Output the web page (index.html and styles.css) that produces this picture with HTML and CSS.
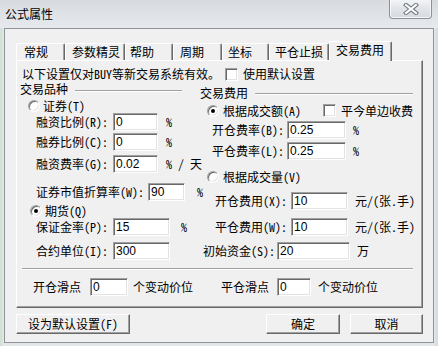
FILE: index.html
```html
<!DOCTYPE html>
<html lang="zh-CN">
<head>
<meta charset="utf-8">
<title>公式属性</title>
<link rel="stylesheet" href="styles.css">
</head>
<body>
<div class="window">
  <div class="titlebar">
    <span class="title">公式属性</span>
    <div class="close">
      <svg width="18" height="12" viewBox="0 0 18 12">
        <path d="M4 2 L14 10 M14 2 L4 10" stroke="#737b85" stroke-width="4.2" stroke-linecap="square"/>
        <path d="M4 2 L14 10 M14 2 L4 10" stroke="#ffffff" stroke-width="2" stroke-linecap="square"/>
      </svg>
    </div>
  </div>
  <div class="client">
    <div class="tabs">
      <div class="tab t-a">常规</div>
      <div class="tab t-b">参数精灵</div>
      <div class="tab t-c">帮助</div>
      <div class="tab t-d">周期</div>
      <div class="tab t-e">坐标</div>
      <div class="tab t-f">平仓止损</div>
      <div class="tab sel">交易费用</div>
    </div>
    <div class="panel">
      <div class="intro">
        <span class="intro-text">以下设置仅对BUY等新交易系统有效。</span>
        <span class="check"></span>
        <span class="check-label">使用默认设置</span>
      </div>
      <div class="cols">
        <div class="col col-left">
          <div class="group-head gh-left"><span>交易品种</span><span class="etch gl-left"></span></div>
          <div class="radio-row rr-sec"><span class="radio"></span><span>证券(T)</span></div>
          <div class="row r1"><span class="lbl l-l">融资比例(R):</span><input class="inp i-l1" value="0"><span class="unit u-l">%</span></div>
          <div class="row r2"><span class="lbl l-l">融券比例(C):</span><input class="inp i-l1" value="0"><span class="unit u-l">%</span></div>
          <div class="row r3"><span class="lbl l-l">融资费率(G):</span><input class="inp i-l1" value="0.02"><span class="unit u-l">% / 天</span></div>
          <div class="row r4"><span class="lbl l-w">证券市值折算率(W):</span><input class="inp i-l2" value="90"><span class="unit u-w">%</span></div>
          <div class="radio-row rr-fut"><span class="radio on"></span><span>期货(Q)</span></div>
          <div class="row r5"><span class="lbl l-l">保证金率(P):</span><input class="inp i-l3" value="15"><span class="unit u-p">%</span></div>
          <div class="row r6"><span class="lbl l-l">合约单位(I):</span><input class="inp i-l3" value="300"></div>
        </div>
        <div class="col col-right">
          <div class="group-head gh-right"><span>交易费用</span><span class="etch gl-right"></span></div>
          <div class="radio-row rr-amt">
            <span class="radio on"></span><span class="radio-text-amt">根据成交额(A)</span>
            <span class="check"></span><span class="check-label">平今单边收费</span>
          </div>
          <div class="row q1"><span class="lbl l-r1">开仓费率(B):</span><input class="inp i-r1" value="0.25"><span class="unit u-r">%</span></div>
          <div class="row q2"><span class="lbl l-r1">平仓费率(L):</span><input class="inp i-r1" value="0.25"><span class="unit u-r">%</span></div>
          <div class="radio-row rr-vol"><span class="radio"></span><span>根据成交量(V)</span></div>
          <div class="row q3"><span class="lbl l-r2">开仓费用(X):</span><input class="inp i-r2" value="10"><span class="unit u-r">元/(张.手)</span></div>
          <div class="row q4"><span class="lbl l-r2">平仓费用(W):</span><input class="inp i-r2" value="10"><span class="unit u-r">元/(张.手)</span></div>
          <div class="row q5"><span class="lbl l-r3">初始资金(S):</span><input class="inp i-r3" value="20"><span class="unit u-r">万</span></div>
        </div>
      </div>
      <div class="etch sep"></div>
      <div class="row slip">
        <span class="lbl l-s1">开仓滑点</span><input class="inp i-s1" value="0"><span class="unit u-s1">个变动价位</span>
        <span class="lbl l-s2">平仓滑点</span><input class="inp i-s2" value="0"><span class="unit u-s2">个变动价位</span>
      </div>
    </div>
    <div class="buttons">
      <div class="btn b-def">设为默认设置(F)</div>
      <div class="btn-group">
        <div class="btn b-ok">确定</div>
        <div class="btn b-cancel">取消</div>
      </div>
    </div>
  </div>
</div>
</body>
</html>
```

FILE: styles.css
```css
* { box-sizing: border-box; }

body {
  margin: 0;
  font: 12px/14px "Noto Sans Mono CJK SC", "Noto Sans CJK SC", sans-serif;
  color: #000;
  background: #dfe3e7;
}

.window {
  width: 438px;
  height: 346px;
  overflow: hidden;
  display: flex;
  flex-direction: column;
  background: linear-gradient(to right, #cfe0cf 0, #e3e7ea 4px, #e3e7ea 434px, #d4d9de 438px);
}

.titlebar {
  height: 28px;
  flex: none;
  display: flex;
  align-items: flex-start;
  background: linear-gradient(#d7dbe0, #e6e9ed);
}

.title {
  margin: 7px 0 0 5px;
  line-height: 14px;
  font-family: "Noto Sans CJK SC", sans-serif;
}

.close {
  margin-left: auto;
  margin-right: 6px;
  width: 43px;
  height: 19px;
  border: 1px solid #8b9098;
  border-top: none;
  border-radius: 0 0 4px 4px;
  background: linear-gradient(#f3f4f6, #e1e4e8 50%, #d6dadf);
  box-shadow: inset 0 -1px #f6f7f8, inset 1px 0 #f6f7f8, inset -1px 0 #f6f7f8;
  display: flex;
  align-items: center;
  justify-content: center;
}

.client {
  margin-left: 4px;
  width: 430px;
  height: 315px;
  border: 1px solid #8e949a;
  background: #f0f0f0;
  padding: 12px 0 0 11px;
}

/* tabs */
.tabs {
  display: flex;
  align-items: flex-end;
  height: 19px;
}

.tab {
  height: 17px;
  border-top: 1px solid #fff;
  border-left: 1px solid #fff;
  border-right: 1px solid #696969;
  box-shadow: inset -1px 0 #a0a0a0;
  border-radius: 2px 2px 0 0;
  padding-left: 7px;
  line-height: 15px;
  white-space: nowrap;
}

.t-a { width: 49px; padding-left: 7px; }
.t-b { width: 60px; padding-left: 6px; }
.t-c { width: 48px; padding-left: 4px; }
.t-d { width: 49px; padding-left: 6px; }
.t-e { width: 47px; padding-left: 5px; }
.t-f { width: 60px; padding-left: 5px; }

.tab.sel {
  width: 63px;
  height: 20px;
  margin-bottom: -1px;
  padding-left: 6px;
  line-height: 16px;
  background: #f0f0f0;
  position: relative;
  z-index: 1;
}

/* panel */
.panel {
  width: 407px;
  height: 248px;
  border: 1px solid;
  border-color: #fff #696969 #696969 #fff;
  box-shadow: inset -1px -1px #a0a0a0;
}

.intro {
  display: flex;
  align-items: center;
  height: 16px;
  margin-top: 5px;
  padding-left: 5px;
}

.intro-text { width: 203px; white-space: nowrap; }

.check {
  flex: none;
  width: 13px;
  height: 13px;
  background: #fff;
  border: 1px solid;
  border-color: #a0a0a0 #fff #fff #a0a0a0;
  box-shadow: inset 1px 1px #696969, inset -1px -1px #e3e3e3;
}

.check-label { margin-left: 5px; white-space: nowrap; }

.cols {
  display: flex;
  height: 186px;
}

.col { display: flex; flex-direction: column; }
.col-left { width: 183px; }
.col-right { width: 215px; }

.group-head {
  display: flex;
  align-items: center;
  height: 13px;
  line-height: 12px;
  white-space: nowrap;
}

.gh-left { margin-top: 0; padding-left: 3px; }
.gh-right { margin-top: 4px; }

.etch {
  display: block;
  height: 2px;
  border-top: 1px solid #a0a0a0;
  border-bottom: 1px solid #fff;
}

.gl-left { width: 107px; margin-left: 7px; margin-top: 4px; }
.gl-right { flex: 1; margin-left: 7px; margin-right: 2px; margin-top: 2px; }

.radio-row {
  display: flex;
  align-items: center;
  height: 13px;
  line-height: 12px;
  white-space: nowrap;
}

.radio {
  flex: none;
  width: 12px;
  height: 12px;
  margin-right: 3px;
  border-radius: 50%;
  background: #fff;
  border: 1px solid;
  border-color: #a0a0a0 #fff #fff #a0a0a0;
  box-shadow: inset 1px 1px #696969, inset -1px -1px #e3e3e3;
  display: flex;
  align-items: center;
  justify-content: center;
}

.radio.on::after {
  content: "";
  width: 4px;
  height: 4px;
  border-radius: 50%;
  background: #000;
}

.rr-sec { padding-left: 11px; margin-top: 4px; }
.rr-fut { padding-left: 13px; margin-top: 4px; height: 12px; }
.rr-amt { padding-left: 7px; margin-top: 5px; }
.rr-amt .radio { margin-right: 4px; }
.radio-text-amt { width: 100px; }
.rr-vol { padding-left: 7px; margin-top: 11px; height: 12px; }
.rr-vol .radio { margin-right: 4px; }

.row {
  display: flex;
  align-items: center;
  height: 18px;
  white-space: nowrap;
}

.lbl { flex: none; }

.inp {
  flex: none;
  height: 18px;
  margin: 0;
  padding: 0 0 1px 2px;
  border: 1px solid;
  border-color: #a0a0a0 #fff #fff #a0a0a0;
  box-shadow: inset 1px 1px #696969, inset -1px -1px #e3e3e3;
  background: #fff;
  font: 12px "Liberation Sans", sans-serif;
  color: #000;
  outline: none;
}

.unit { flex: none; }

/* left column rows */
.r1 { margin-top: 1px; }
.r2 { margin-top: 2px; }
.r3 { margin-top: 4px; }
.r4 { margin-top: 10px; }
.r5 { margin-top: 1px; }
.r6 { margin-top: 6px; }

.l-l { width: 96px; padding-left: 19px; }
.l-w { width: 131px; padding-left: 19px; }
.i-l1 { width: 45px; }
.i-l2 { width: 37px; }
.i-l3 { width: 57px; }
.u-l { margin-left: 8px; }
.u-w { margin-left: 12px; }
.u-p { margin-left: 11px; }

/* right column rows */
.q1 { margin-top: 4px; }
.q2 { margin-top: 3px; }
.q3 { margin-top: 9px; }
.q4 { margin-top: 8px; }
.q5 { margin-top: 6px; }

.l-r1 { width: 87px; padding-left: 12px; }
.l-r2 { width: 91px; padding-left: 15px; }
.l-r3 { width: 77px; padding-left: 3px; }
.i-r1 { width: 59px; }
.i-r2 { width: 57px; }
.i-r3 { width: 73px; }
.u-r { margin-left: 7px; }

/* separator and slippage */
.sep { width: 391px; margin-left: 5px; }

.slip { margin-top: 8px; }
.l-s1 { width: 73px; padding-left: 16px; }
.i-s1 { width: 38px; }
.u-s1 { width: 88px; margin-left: 5px; }
.l-s2 { width: 56px; }
.i-s2 { width: 34px; }
.u-s2 { margin-left: 7px; }

/* buttons */
.buttons {
  display: flex;
  justify-content: space-between;
  width: 407px;
  margin-top: 6px;
}

.btn-group { display: flex; gap: 10px; }

.btn {
  height: 20px;
  border: 1px solid;
  border-color: #fff #696969 #696969 #fff;
  box-shadow: inset -1px -1px #a0a0a0;
  background: #f0f0f0;
  display: flex;
  align-items: center;
  justify-content: center;
  white-space: nowrap;
  padding-bottom: 1px;
}

.b-def { width: 114px; }
.b-ok { width: 74px; }
.b-cancel { width: 73px; }
```
